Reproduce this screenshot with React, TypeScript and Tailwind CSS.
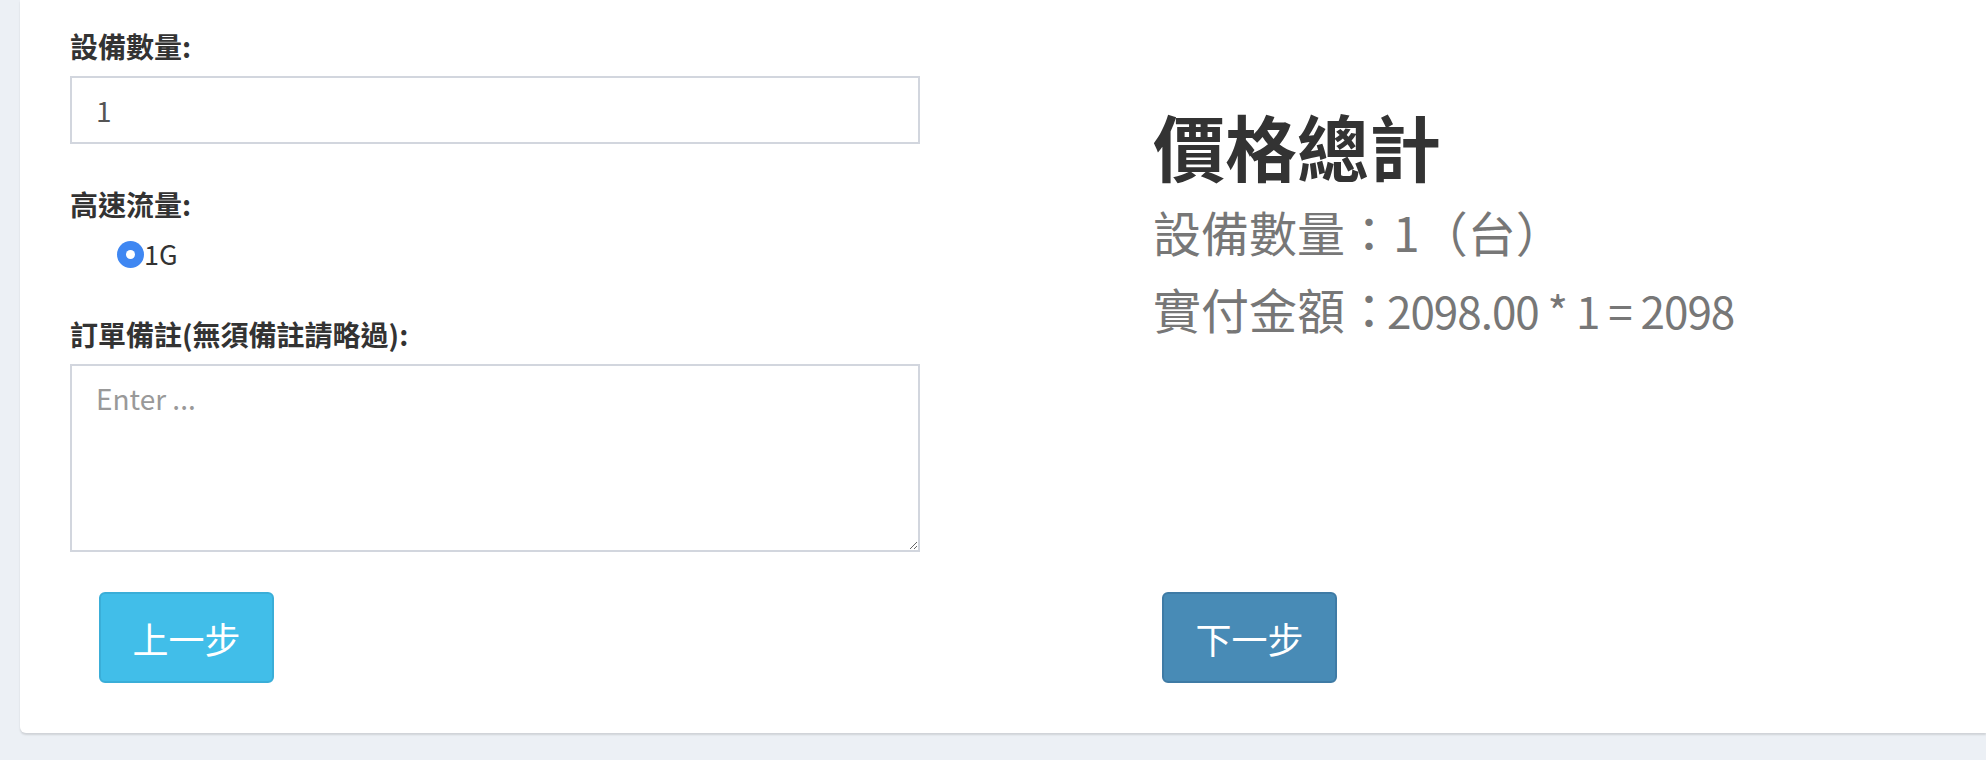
import React from "react";

const font = { fontFamily: '"Noto Sans CJK TC", "Noto Sans", sans-serif' };

export default function App() {
  return (
    <div
      className="w-full h-[760px] bg-[#ecf0f5] overflow-hidden"
      style={font}
    >
      <div className="ml-[20px] bg-white rounded-bl-[6px] shadow-[0_2px_2px_rgba(0,0,0,0.12)] flex pt-[26px] pb-[50px]">
        {/* left column */}
        <div className="ml-[50px] w-[850px] flex flex-col">
          <label className="text-[28px] leading-[40px] font-bold text-[#333] mb-[10px]">
            設備數量:
          </label>
          <input
            defaultValue="1"
            className="h-[68px] w-full border-2 border-[#d2d6de] px-[24px] text-[28px] text-[#555] outline-none"
            style={font}
          />
          <label className="text-[28px] leading-[40px] font-bold text-[#333] mt-[40px] mb-[10px]">
            高速流量:
          </label>
          <div className="h-[40px] flex items-center pl-[47px]">
            <span className="w-[27px] h-[27px] rounded-full bg-[#3f87f2] flex items-center justify-center">
              <span className="w-[9px] h-[9px] rounded-full bg-white" />
            </span>
            <span className="text-[27px] text-[#333] leading-[40px]">1G</span>
          </div>
          <label className="text-[28px] leading-[40px] font-bold text-[#333] mt-[40px] mb-[10px]">
            訂單備註(無須備註請略過):
          </label>
          <textarea
            placeholder="Enter ..."
            className="h-[188px] w-full border-2 border-[#d2d6de] px-[24px] py-[12px] text-[28px] leading-[40px] text-[#555] placeholder:text-[#999] outline-none"
            style={font}
          />
          <div className="mt-[40px] pl-[29px]">
            <button className="w-[175px] h-[91px] rounded-[6px] bg-[#41bee9] border-2 border-[#3aaed8] text-white text-[36px] leading-none">
              上一步
            </button>
          </div>
        </div>
        {/* right column */}
        <div className="ml-[233px] flex flex-col">
          <div className="mt-[79px] text-[72px] leading-[80px] font-bold text-[#333]">
            價格總計
          </div>
          <div className="mt-[18px] text-[48px] leading-[56px] text-[#777]">
            設備數量：1（台）
          </div>
          <div className="mt-[21px] text-[48px] leading-[56px] text-[#777]">
            實付金額：
            <span className="ml-[-6px] text-[44px] tracking-[-1px]">2098.00 * 1 = 2098</span>
          </div>
          <div className="flex-1" />
          <div className="pl-[9px]">
            <button className="w-[175px] h-[91px] rounded-[6px] bg-[#488bb6] border-2 border-[#3f7ba5] text-white text-[36px] leading-none">
              下一步
            </button>
          </div>
        </div>
      </div>
    </div>
  );
}
